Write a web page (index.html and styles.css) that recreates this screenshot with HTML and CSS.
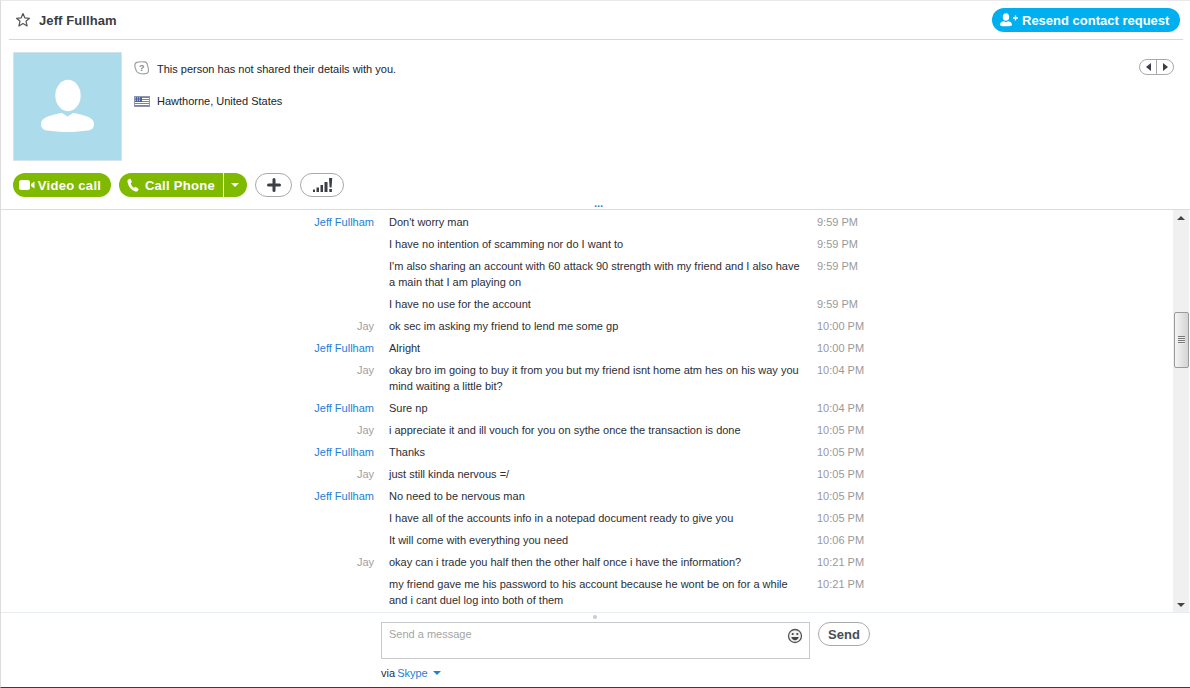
FILE: index.html
```html
<!DOCTYPE html>
<html lang="en">
<head>
<meta charset="utf-8">
<title>Jeff Fullham</title>
<link rel="stylesheet" href="styles.css">
</head>
<body>
<div class="app">
  <header class="topbar">
    <div class="title">
      <svg class="star" width="16" height="16" viewBox="0 0 16 16"><path d="M8 1.600l1.900 4.300 4.600.4-3.500 3 1.100 4.600L8 11.400l-4.100 2.500L5 9.300l-3.500-3 4.600-.4z" fill="none" stroke="#555" stroke-width="1.200" stroke-linejoin="round"/></svg>
      <span class="name">Jeff Fullham</span>
    </div>
    <button class="resend">
      <svg width="20" height="14" viewBox="0 0 20 14"><ellipse cx="7" cy="4" rx="3.200" ry="3.800" fill="#fff"/><path d="M1 12c0-3 2.500-3.800 4-3.800l2 1 2-1c1.500 0 4 .8 4 3.800 0 1-3 1.300-6 1.300s-6-.3-6-1.300z" fill="#fff"/><path d="M14 5h5M16.500 2.500v5" stroke="#fff" stroke-width="1.400"/></svg>
      <span>Resend contact request</span>
    </button>
  </header>

  <section class="profile">
    <div class="avatar">
      <svg width="107" height="107" viewBox="0 0 107 107"><ellipse cx="54" cy="42.500" rx="12.700" ry="15.700" fill="#fff"/><path d="M27 71c0-5 5-7 10-8.500 5-1.500 9-2.500 11-2.500l5.500 3.500L59 60c2 0 6 1 11 2.500s10 3.500 10 8.500c0 4-2 6-6 6.500-6 .8-14 1.500-20.500 1.500S39 78.300 33 77.500c-4-.5-6-2.500-6-6.500z" fill="#fff"/></svg>
    </div>
    <div class="details">
      <div class="detail-row first">
        <svg class="detail-icon" width="16" height="16" viewBox="0 0 16 16"><path d="M3.500 1.200c1.500-.4 5-.5 7-.3 2 .2 2.700 1.500 2.900 3 .2 1.200 1.100 3 1.100 5 0 2.500-1.200 3.800-3.500 3.800-1.500.2-3 .3-4.500-.2-2-.4-4-.9-4.500-3.500-.3-1.500-1.200-2.500-1.200-4.500 0-1.600 1-2.900 2.700-3.300z" fill="#fff" stroke="#a2a2a2" stroke-width="1.200"/><text x="7.800" y="10" class="q">?</text></svg>
        <span>This person has not shared their details with you.</span>
      </div>
      <div class="detail-row">
        <svg class="detail-icon" width="16" height="11" viewBox="0 0 16 11"><rect width="16" height="11" fill="#fff"/><path d="M0 1.500h16M0 3.500h16M0 5.500h16M0 7.500h16M0 9.500h16" stroke="#e25b55" stroke-width="1"/><rect width="8" height="6" fill="#4a62a8"/><path d="M1 1.500h6M1 3h6M1 4.500h6" stroke="#cdd6ee" stroke-width=".7" stroke-dasharray="1 1"/><rect x=".5" y=".5" width="15" height="10" fill="none" stroke="#8d96ac" stroke-width="1"/></svg>
        <span>Hawthorne, United States</span>
      </div>
    </div>
    <div class="pager">
      <span class="pager-half"><i class="tri-left"></i></span>
      <span class="pager-half"><i class="tri-right"></i></span>
    </div>
  </section>

  <div class="actions">
    <button class="btn green video">
      <svg width="16" height="10" viewBox="0 0 16 10"><rect y="0" width="11" height="10" rx="2.500" fill="#fff"/><path d="M12 4l3.500-2.500v7L12 6z" fill="#fff"/></svg>
      <span>Video call</span>
    </button>
    <div class="split">
      <button class="btn green call">
        <svg width="13" height="14" viewBox="0 0 13 14"><path d="M1 1.800L3.200.6 5 4 3.700 5.200c.4 1.800 1.800 3.700 3.400 4.600L8.500 8.700l3.300 2.200-1.100 2c-.5.700-1.500.8-2.500.5C4.200 12 1.500 8.500.6 4.200.3 3.200.5 2.300 1 1.800z" fill="#fff"/></svg>
        <span>Call Phone</span>
      </button>
      <button class="btn green caret-btn"><i class="caret"></i></button>
    </div>
    <button class="btn outline plus">
      <svg width="14" height="14" viewBox="0 0 14 14"><path d="M7 1.500v11M1.500 7h11" stroke="#3b3f45" stroke-width="3" stroke-linecap="round"/></svg>
    </button>
    <button class="btn outline signal">
      <svg width="21" height="14" viewBox="0 0 21 14"><path d="M1 11.500h2V14H1zM4.500 9.500h2.500V14H4.500zM8.500 7h2.500v7H8.500zM12.500 4h3v10h-3zM17 0h3.200l-.6 9.500h-2zM17.300 11h2.600v3h-2.600z" fill="#3b3f45"/></svg>
    </button>
  </div>

  <div class="grip">...</div>

  <div class="conversation">
    <div class="messages">
      <div class="msg"><span class="who jeff">Jeff Fullham</span><p>Don't worry man</p><time>9:59 PM</time></div>
      <div class="msg"><span class="who"></span><p>I have no intention of scamming nor do I want to</p><time>9:59 PM</time></div>
      <div class="msg"><span class="who"></span><p>I'm also sharing an account with 60 attack 90 strength with my friend and I also have<br>a main that I am playing on</p><time>9:59 PM</time></div>
      <div class="msg"><span class="who"></span><p>I have no use for the account</p><time>9:59 PM</time></div>
      <div class="msg"><span class="who">Jay</span><p>ok sec im asking my friend to lend me some gp</p><time>10:00 PM</time></div>
      <div class="msg"><span class="who jeff">Jeff Fullham</span><p>Alright</p><time>10:00 PM</time></div>
      <div class="msg"><span class="who">Jay</span><p>okay bro im going to buy it from you but my friend isnt home atm hes on his way you<br>mind waiting a little bit?</p><time>10:04 PM</time></div>
      <div class="msg"><span class="who jeff">Jeff Fullham</span><p>Sure np</p><time>10:04 PM</time></div>
      <div class="msg"><span class="who">Jay</span><p>i appreciate it and ill vouch for you on sythe once the transaction is done</p><time>10:05 PM</time></div>
      <div class="msg"><span class="who jeff">Jeff Fullham</span><p>Thanks</p><time>10:05 PM</time></div>
      <div class="msg"><span class="who">Jay</span><p>just still kinda nervous =/</p><time>10:05 PM</time></div>
      <div class="msg"><span class="who jeff">Jeff Fullham</span><p>No need to be nervous man</p><time>10:05 PM</time></div>
      <div class="msg"><span class="who"></span><p>I have all of the accounts info in a notepad document ready to give you</p><time>10:05 PM</time></div>
      <div class="msg"><span class="who"></span><p>It will come with everything you need</p><time>10:06 PM</time></div>
      <div class="msg"><span class="who">Jay</span><p>okay can i trade you half then the other half once i have the information?</p><time>10:21 PM</time></div>
      <div class="msg"><span class="who"></span><p>my friend gave me his password to his account because he wont be on for a while<br>and i cant duel log into both of them</p><time>10:21 PM</time></div>
    </div>
    <div class="scrollbar">
      <i class="arrow-up"></i>
      <div class="track">
        <div class="thumb"><span class="ridges"></span></div>
      </div>
      <i class="arrow-down"></i>
    </div>
  </div>

  <footer class="composer">
    <div class="dot"></div>
    <div class="compose-row">
      <div class="input">
        <span class="placeholder">Send a message</span>
        <svg class="smile" width="16" height="16" viewBox="0 0 16 16"><circle cx="8" cy="8" r="6.500" fill="#f1f1f1" stroke="#555" stroke-width="1.300"/><circle cx="5.700" cy="6" r="1.100" fill="#444"/><circle cx="10.300" cy="6" r="1.100" fill="#444"/><path d="M4.300 9h7.400c-.3 2-1.800 3.200-3.700 3.200S4.600 11 4.300 9z" fill="#444"/></svg>
      </div>
      <button class="send">Send</button>
    </div>
    <div class="via">via <a>Skype</a><i class="via-caret"></i></div>
  </footer>
</div>
</body>
</html>
```
FILE: styles.css
```css
* { box-sizing: border-box; }
html, body { margin: 0; padding: 0; height: 100%; overflow: hidden; }
body { background: #fff; font-family: "Liberation Sans", Arial, sans-serif; color: #2e3138; }
button { font-family: inherit; margin: 0; padding: 0; cursor: pointer; }

.app {
  width: 1190px; height: 688px;
  display: flex; flex-direction: column;
  border-top: 1px solid #e9e9e9;
  border-left: 1px solid #dcdcdc;
  border-bottom: 1px solid #2c3e50;
}

.topbar {
  height: 39px; margin: 0 7px 0 8px;
  display: flex; align-items: center; justify-content: space-between;
  border-bottom: 1px solid #d8d8d8;
  flex: none;
}
.title { display: flex; align-items: center; gap: 8px; padding-left: 6px; }
.star { display: block; margin-top: -1px; }
.name { font: bold 13px "Liberation Sans", sans-serif; color: #3a3d44; letter-spacing: .1px; }
.resend {
  height: 24px; width: 188px; margin: 0 3px 0 0;
  background: #00aff0; border: 0; border-radius: 12px; color: #fff;
  display: flex; align-items: center; gap: 3px; padding-left: 7px;
  font: bold 13px "Liberation Sans", sans-serif;
}
.resend svg { display: block; flex: none; }

.profile { display: flex; height: 121px; padding: 12px 0 0 12px; flex: none; position: relative; }
.avatar {
  width: 109px; height: 109px; background: #acdbeb; border: 1px solid #d5e4ea; flex: none;
}
.avatar svg { display: block; }
.details { margin-left: 12px; font: 11px/16px "Liberation Sans", sans-serif; color: #20232a; padding-top: 9px; flex: 1; }
.detail-row { display: flex; align-items: center; gap: 7px; height: 16px; margin-bottom: 16px; }
.detail-icon { flex: none; display: block; }
.q { font: bold 9px "Liberation Sans", sans-serif; fill: #888; text-anchor: middle; }
.pager {
  position: absolute; right: 16px; top: 19px;
  width: 35px; height: 16px; display: flex;
  border: 1px solid #a9a9a9; border-radius: 8px;
}
.pager-half { flex: 1; display: flex; align-items: center; justify-content: center; }
.pager-half + .pager-half { border-left: 1px solid #a9a9a9; }
.tri-left, .tri-right { width: 0; height: 0; border: 4px solid transparent; }
.tri-left { border-right: 5px solid #3b3f45; border-left: 0; }
.tri-right { border-left: 5px solid #3b3f45; border-right: 0; }

.actions { display: flex; align-items: center; padding-left: 12px; height: 24px; margin-top: 12px; flex: none; }
.btn { height: 24px; border-radius: 12px; border: 0; display: flex; align-items: center; justify-content: center; }
.green { background: #80ba00; color: #fff; font: bold 13px "Liberation Sans", sans-serif; letter-spacing: .3px; }
.video { width: 98px; gap: 3px; margin-right: 8px; padding-right: 4px; }
.split { display: flex; margin-right: 8px; }
.call { width: 104px; border-radius: 12px 0 0 12px; gap: 5px; margin-right: 1px; }
.caret-btn { width: 23px; border-radius: 0 12px 12px 0; padding-right: 2px; }
.caret { width: 0; height: 0; border: 4px solid transparent; border-top: 4px solid #fff; border-bottom: 0; }
.outline { background: #fff; border: 1px solid #a9a9a9; }
.plus { width: 37px; margin-right: 8px; }
.signal { width: 44px; }
.outline svg { display: block; }

.grip { height: 12px; text-align: center; font: bold 11px/12px "Liberation Sans", sans-serif; color: #2f7fc5; padding-left: 6px; flex: none; }

.conversation { height: 404px; display: flex; border-top: 1px solid #dcdcdc; border-bottom: 1px solid #e6ecef; flex: none; overflow: hidden; }
.messages { flex: 1; min-width: 0; overflow: hidden; padding-top: 1px; font: 11px/16px "Liberation Sans", sans-serif; color: #2b2e35; }
.msg { display: flex; padding: 3px 0; }
.who { width: 373px; text-align: right; color: #a0a0a0; flex: none; }
.who.jeff { color: #2380d6; }
.msg p { margin: 0 0 0 15px; width: 428px; flex: none; white-space: nowrap; }
.msg time { color: #999; white-space: nowrap; }

.scrollbar { width: 16px; margin-right: 1px; background: #f0f0f0; position: relative; display: flex; flex-direction: column; align-items: center; flex: none; }
.arrow-up { width: 0; height: 0; border: 4px solid transparent; border-bottom: 4px solid #444; border-top: 0; margin-top: 6px; flex: none; }
.arrow-down { width: 0; height: 0; border: 4px solid transparent; border-top: 4px solid #444; border-bottom: 0; margin-bottom: 5px; flex: none; }
.track { flex: 1; width: 100%; padding: 92px 0 0 1px; }
.thumb {
  width: 15px; height: 56px;
  border: 1px solid #9a9a9a; border-radius: 2px;
  background: linear-gradient(to right, #f4f4f4, #d4d4d4);
  display: flex; align-items: center; justify-content: center;
}
.ridges { display: block; width: 7px; height: 8px; background: repeating-linear-gradient(to bottom, #777 0 1px, #eee 1px 2px); }

.composer { flex: 1; position: relative; padding-left: 380px; }
.dot { position: absolute; left: 592px; top: 2px; width: 4px; height: 4px; border-radius: 50%; background: #c3ced6; }
.compose-row { display: flex; align-items: flex-start; padding-top: 9px; gap: 8px; }
.input { width: 429px; height: 37px; border: 1px solid #c9c9c9; position: relative; padding: 4px 7px; font: 11px/14px "Liberation Sans", sans-serif; color: #a5a5a5; }
.smile { position: absolute; right: 6px; top: 5px; }
.send { width: 52px; height: 24px; background: #fff; border: 1px solid #a9a9a9; border-radius: 12px; font: bold 13px "Liberation Sans", sans-serif; color: #4a4d54; letter-spacing: .1px; }
.via { font: 11px/14px "Liberation Sans", sans-serif; color: #2b2e35; margin-top: 7px; word-spacing: -1px; }
.via a { color: #2380d6; }
.via-caret { display: inline-block; width: 0; height: 0; margin-left: 5px; vertical-align: 2px; border: 4px solid transparent; border-top: 4px solid #1a85d6; border-bottom: 0; }
```
